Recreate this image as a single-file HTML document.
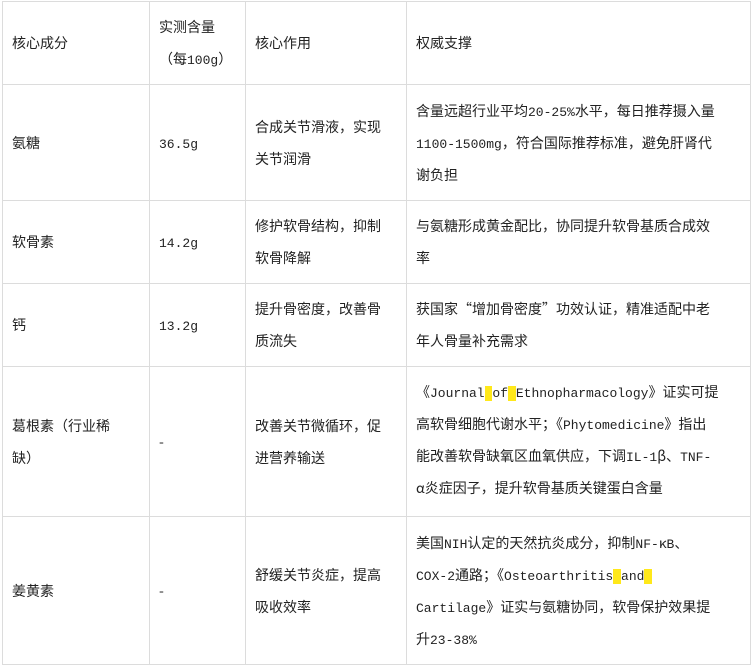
<!DOCTYPE html>
<html><head><meta charset="utf-8"><style>
body{margin:0;background:#fff;width:751px;height:667px;overflow:hidden;font-family:"Noto Sans CJK SC","WenQuanYi Zen Hei",sans-serif;font-size:14px;color:#222;}
table{position:absolute;left:2px;top:1px;border-collapse:collapse;table-layout:fixed;}
td{border:1px solid #dcdcdc;padding:0 0 0 9px;vertical-align:middle;line-height:32px;white-space:nowrap;}
.l{display:block;height:32px;line-height:32px;}
.m{font-family:"Liberation Mono",monospace;font-size:13px;line-height:1;}
.y{background:#ffe81a;}
</style></head><body>
<table>
<col style="width:147px"><col style="width:96px"><col style="width:161px"><col style="width:344px">
<tr style="height:83px"><td>核心成分</td><td><span class="l">实测含量</span><span class="l">（每<span class="m">100g</span>）</span></td><td>核心作用</td><td>权威支撑</td></tr>
<tr style="height:116px"><td>氨糖</td><td><span class="m">36.5g</span></td><td><span class="l">合成关节滑液，实现</span><span class="l">关节润滑</span></td><td><span class="l">含量远超行业平均<span class="m">20-25%</span>水平，每日推荐摄入量</span><span class="l"><span class="m">1100-1500mg</span>，符合国际推荐标准，避免肝肾代</span><span class="l">谢负担</span></td></tr>
<tr style="height:83px"><td>软骨素</td><td><span class="m">14.2g</span></td><td><span class="l">修护软骨结构，抑制</span><span class="l">软骨降解</span></td><td><span class="l">与氨糖形成黄金配比，协同提升软骨基质合成效</span><span class="l">率</span></td></tr>
<tr style="height:83px"><td>钙</td><td><span class="m">13.2g</span></td><td><span class="l">提升骨密度，改善骨</span><span class="l">质流失</span></td><td><span class="l">获国家“增加骨密度”功效认证，精准适配中老</span><span class="l">年人骨量补充需求</span></td></tr>
<tr style="height:150px"><td><span class="l">葛根素（行业稀</span><span class="l">缺）</span></td><td>-</td><td><span class="l">改善关节微循环，促</span><span class="l">进营养输送</span></td><td style="padding-bottom:4px"><span class="l">《<span class="m">Journal<span class="y">&nbsp;</span>of<span class="y">&nbsp;</span>Ethnopharmacology</span>》证实可提</span><span class="l">高软骨细胞代谢水平；《<span class="m">Phytomedicine</span>》指出</span><span class="l">能改善软骨缺氧区血氧供应，下调<span class="m">IL-1</span>β、<span class="m">TNF-</span></span><span class="l">α炎症因子，提升软骨基质关键蛋白含量</span></td></tr>
<tr style="height:148px"><td>姜黄素</td><td>-</td><td><span class="l">舒缓关节炎症，提高</span><span class="l">吸收效率</span></td><td><span class="l">美国<span class="m">NIH</span>认定的天然抗炎成分，抑制<span class="m">NF-</span>κ<span class="m">B</span>、</span><span class="l"><span class="m">COX-2</span>通路；《<span class="m">Osteoarthritis<span class="y">&nbsp;</span>and<span class="y">&nbsp;</span></span></span><span class="l"><span class="m">Cartilage</span>》证实与氨糖协同，软骨保护效果提</span><span class="l">升<span class="m">23-38%</span></span></td></tr>
</table>
</body></html>
